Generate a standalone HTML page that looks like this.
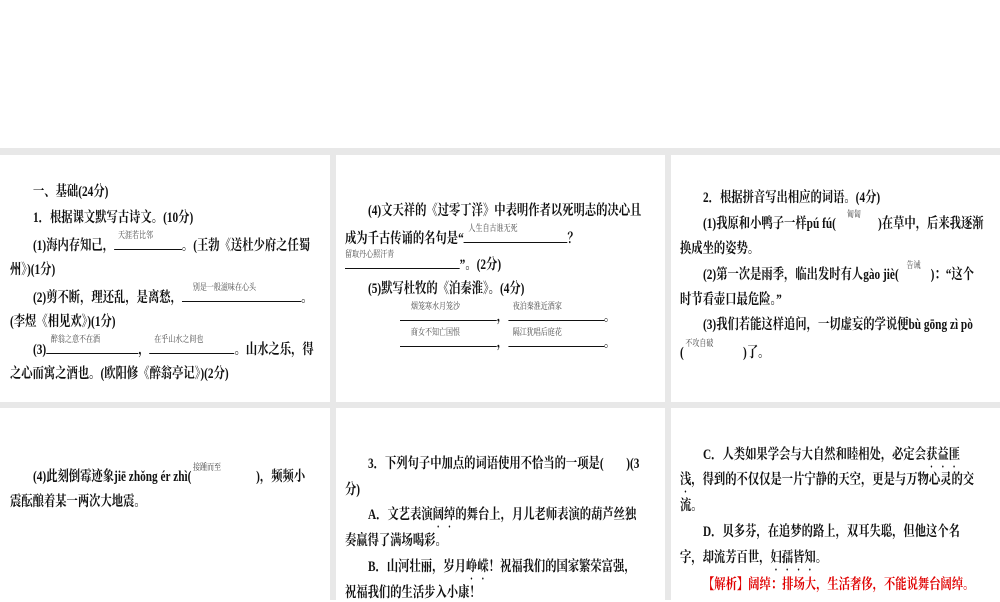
<!DOCTYPE html>
<html><head><meta charset="utf-8"><style>
body{margin:0;width:1000px;height:600px;overflow:hidden;background:#fff;position:relative;font-family:"Liberation Serif","Noto Serif CJK SC",serif;}
.g{position:absolute;left:0;top:148px;width:1000px;height:452px;background:#e8e8e8;}
.p{position:absolute;background:#fff;}
.l{position:absolute;font-size:14.5px;font-weight:bold;white-space:nowrap;line-height:18px;color:#111;transform:scaleX(0.78);transform-origin:0 0;}
.u{display:inline-block;border-bottom:1px solid #111;position:relative;height:14px;vertical-align:baseline;}
.s{position:absolute;font-size:9px;font-weight:normal;color:#444;top:-9px;left:6px;white-space:nowrap;}
.d{text-emphasis:dot;-webkit-text-emphasis:dot;text-emphasis-position:under;-webkit-text-emphasis-position:under;}
.r{color:#e00000;}
</style></head><body>
<div class="g"></div>
<div class="p" style="left:0;top:155px;width:330px;height:247px"></div>
<div class="p" style="left:336px;top:155px;width:329px;height:247px"></div>
<div class="p" style="left:671px;top:155px;width:329px;height:247px"></div>
<div class="p" style="left:0;top:408px;width:330px;height:192px"></div>
<div class="p" style="left:336px;top:408px;width:329px;height:192px"></div>
<div class="p" style="left:671px;top:408px;width:329px;height:192px"></div>

<div class="l" style="left:33px;top:183px">一、基础(24分)</div>
<div class="l" style="left:33px;top:209px">1．根据课文默写古诗文。(10分)</div>
<div class="l" style="left:33px;top:235px">(1)海内存知己，<span class="u" style="width:87px"><span class="s" style="left:5px">天涯若比邻</span></span>。(王勃《送杜少府之任蜀</div>
<div class="l" style="left:10px;top:261px">州》)(1分)</div>
<div class="l" style="left:33px;top:287px">(2)剪不断，理还乱，是离愁，<span class="u" style="width:153px"><span class="s" style="left:14px">别是一般滋味在心头</span></span>。</div>
<div class="l" style="left:10px;top:313px">(李煜《相见欢》)(1分)</div>
<div class="l" style="left:33px;top:339px">(3)<span class="u" style="width:118px"><span class="s">醉翁之意不在酒</span></span>，<span class="u" style="width:109px"><span class="s">在乎山水之间也</span></span>。山水之乐，得</div>
<div class="l" style="left:10px;top:365px">之心而寓之酒也。(欧阳修《醉翁亭记》)(2分)</div>

<div class="l" style="left:368px;top:202px">(4)文天祥的《过零丁洋》中表明作者以死明志的决心且</div>
<div class="l" style="left:345px;top:228px">成为千古传诵的名句是“<span class="u" style="width:133px"><span class="s">人生自古谁无死</span></span>？</div>
<div class="l" style="left:345px;top:254px"><span class="u" style="width:147px"><span class="s" style="left:0">留取丹心照汗青</span></span>”。(2分)</div>
<div class="l" style="left:368px;top:280px">(5)默写杜牧的《泊秦淮》。(4分)</div>
<div class="l" style="left:400px;top:306px"><span class="u" style="width:124px"><span class="s" style="left:14px">烟笼寒水月笼沙</span></span>，<span class="u" style="width:123px"><span class="s">夜泊秦淮近酒家</span></span>。</div>
<div class="l" style="left:400px;top:332px"><span class="u" style="width:124px"><span class="s" style="left:14px">商女不知亡国恨</span></span>，<span class="u" style="width:123px"><span class="s">隔江犹唱后庭花</span></span>。</div>

<div class="l" style="left:703px;top:189px">2．根据拼音写出相应的词语。(4分)</div>
<div class="l" style="left:703px;top:214px">(1)我原和小鸭子一样pú fú(<span class="u" style="width:54px;border:none"><span class="s" style="left:14px">匍匐</span></span>)在草中，后来我逐渐</div>
<div class="l" style="left:680px;top:240px">换成坐的姿势。</div>
<div class="l" style="left:703px;top:265px">(2)第一次是雨季，临出发时有人gào jiè(<span class="u" style="width:41px;border:none"><span class="s" style="left:10px">告诫</span></span>)：“这个</div>
<div class="l" style="left:680px;top:291px">时节看壶口最危险。”</div>
<div class="l" style="left:703px;top:316px">(3)我们若能这样追问，一切虚妄的学说便bù gōng zì pò</div>
<div class="l" style="left:680px;top:343px">(<span class="u" style="width:76px;border:none"><span class="s" style="left:2px">不攻自破</span></span>)了。</div>

<div class="l" style="left:33px;top:467px">(4)此刻倒霉迹象jiē zhǒng ér zhì(<span class="u" style="width:83px;border:none"><span class="s" style="left:2px">接踵而至</span></span>)，频频小</div>
<div class="l" style="left:10px;top:493px">震酝酿着某一两次大地震。</div>

<div class="l" style="left:368px;top:455px">3．下列句子中加点的词语使用不恰当的一项是(　　)(3</div>
<div class="l" style="left:345px;top:481px">分)</div>
<div class="l" style="left:368px;top:506px">A．文艺表演<span class="d">阔绰</span>的舞台上，月儿老师表演的葫芦丝独</div>
<div class="l" style="left:345px;top:532px">奏赢得了满场喝彩。</div>
<div class="l" style="left:368px;top:558px">B．山河壮丽，岁月<span class="d">峥嵘</span>！祝福我们的国家繁荣富强，</div>
<div class="l" style="left:345px;top:584px">祝福我们的生活步入小康！</div>

<div class="l" style="left:703px;top:446px">C．人类如果学会与大自然和睦相处，必定会<span class="d">获益匪</span></div>
<div class="l" style="left:680px;top:471px"><span class="d">浅</span>，得到的不仅仅是一片宁静的天空，更是与万物心灵的交</div>
<div class="l" style="left:680px;top:497px">流。</div>
<div class="l" style="left:703px;top:523px">D．贝多芬，在追梦的路上，双耳失聪，但他这个名</div>
<div class="l" style="left:680px;top:549px">字，却流芳百世，<span class="d">妇孺皆知</span>。</div>
<div class="l r" style="left:703px;top:576px">【解析】阔绰：排场大，生活奢侈，不能说舞台阔绰。</div>
</body></html>
